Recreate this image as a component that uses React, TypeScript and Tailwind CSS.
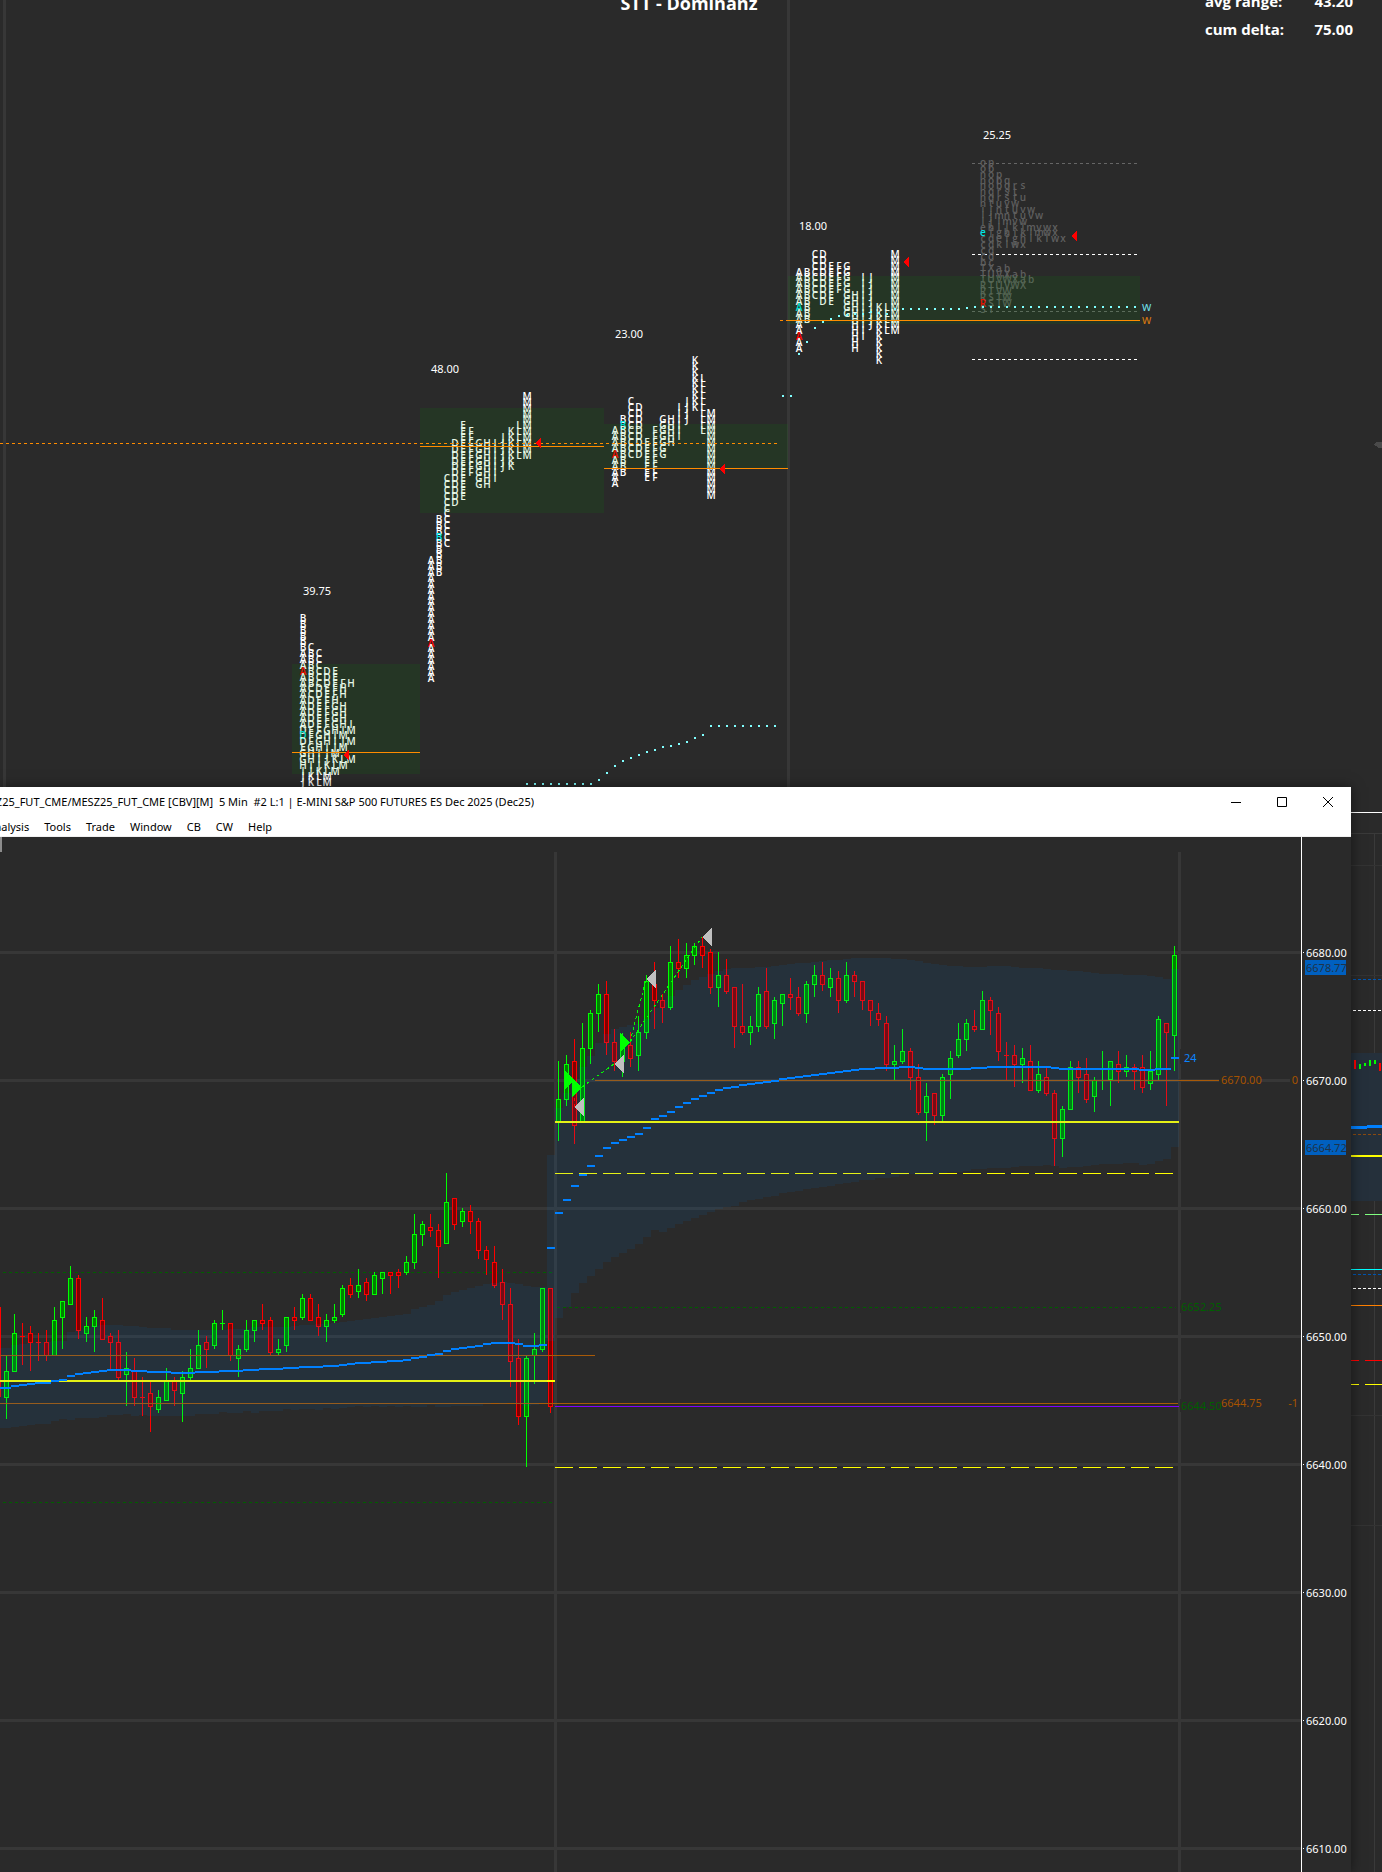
import React from 'react';

type Mark = { row: number; color: string };
type Column = { letter: string; from: number; to: number; marks?: Mark[] };

const ROW = 5.87;
const COL = 8;
const RED = '#ff0000';
const CYAN = '#00e5e5';

// split profiles: one column per bracket, rows are points below the high
const SPLIT_PROFILES: { x: number; y: number; columns: Column[] }[] = [
  {
    x: 431,
    y: 397,
    columns: [
      { letter: 'A', from: 28, to: 48, marks: [{ row: 42, color: RED }] },
      { letter: 'B', from: 21, to: 30, marks: [{ row: 24, color: CYAN }] },
      { letter: 'C', from: 14, to: 25 },
      { letter: 'D', from: 8, to: 18 },
      { letter: 'E', from: 5, to: 17 },
      { letter: 'F', from: 6, to: 13 },
      { letter: 'G', from: 8, to: 15 },
      { letter: 'H', from: 8, to: 15 },
      { letter: 'I', from: 8, to: 14 },
      { letter: 'J', from: 7, to: 12 },
      { letter: 'K', from: 6, to: 12 },
      { letter: 'L', from: 5, to: 10 },
      { letter: 'M', from: 0, to: 10 },
    ],
  },
  {
    x: 615,
    y: 361,
    columns: [
      { letter: 'A', from: 12, to: 21, marks: [{ row: 16, color: RED }] },
      { letter: 'B', from: 10, to: 19, marks: [{ row: 11, color: CYAN }] },
      { letter: 'C', from: 7, to: 16 },
      { letter: 'D', from: 8, to: 16 },
      { letter: 'E', from: 14, to: 20 },
      { letter: 'F', from: 12, to: 20 },
      { letter: 'G', from: 10, to: 16 },
      { letter: 'H', from: 10, to: 14 },
      { letter: 'I', from: 8, to: 13 },
      { letter: 'J', from: 7, to: 10 },
      { letter: 'K', from: 0, to: 8 },
      { letter: 'L', from: 3, to: 12 },
      { letter: 'M', from: 9, to: 23 },
    ],
  },
  {
    x: 799,
    y: 255,
    columns: [
      { letter: 'A', from: 3, to: 16, marks: [{ row: 9, color: CYAN }, { row: 14, color: RED }] },
      { letter: 'B', from: 3, to: 11 },
      { letter: 'C', from: 0, to: 7 },
      { letter: 'D', from: 0, to: 8 },
      { letter: 'E', from: 2, to: 8 },
      { letter: 'F', from: 2, to: 6 },
      { letter: 'G', from: 2, to: 10 },
      { letter: 'H', from: 7, to: 16 },
      { letter: 'I', from: 4, to: 14 },
      { letter: 'J', from: 4, to: 12 },
      { letter: 'K', from: 9, to: 18 },
      { letter: 'L', from: 9, to: 13 },
      { letter: 'M', from: 0, to: 13 },
    ],
  },
];

// collapsed profiles: one string per row
const ROW_PROFILES = [
  {
    x: 303,
    y: 619,
    color: '#ffffff',
    marks: [{ row: 9, color: RED }, { row: 20, color: CYAN }],
    rows: [
      'B', 'B', 'B', 'B', 'B', 'BC', 'ABC', 'ABC', 'ABC', 'ABCDE', 'ABCDE', 'ABCDEFH', 'ACDEFH', 'ACDEFH',
      'ADEFH', 'ADEFGH', 'ADEFGH', 'ADEFGH', 'ADEFGHI', 'DEFGHIM', 'DFGHIM', 'DFGHIJM', 'EGHIJM', 'GHIJM',
      'GHIJKLM', 'HIJKLM', 'IJKLM', 'JKLM', 'JKLM',
    ],
  },
  {
    x: 983,
    y: 163,
    color: '#5f5f5f',
    marks: [{ row: 12, color: CYAN }, { row: 24, color: RED }],
    rows: [
      'op', 'ob', 'nop', 'nobq', 'nobqrs', 'nqrst', 'nqrstu', 'ntuvw', 'ijntuvw', 'ijmntuvw', 'ijlmvw',
      'ehijklmvwx', 'efghiklmwx', 'cdefghiklwx', 'cdklwx', 'cd', 'cd', 'bc', 'TXab', 'TUVXab', 'TUVWXab',
      'RTUVWX', 'RTVW', 'RSTW', 'RSTW', 'ST',
    ],
  },
];

const VALUE_AREAS = [
  [292, 664, 128, 110],
  [420, 408, 184, 105],
  [604, 424, 184, 44],
  [788, 276, 352, 48],
];

const RANGE_LABELS: [number, number, string][] = [
  [303, 595, '39.75'],
  [431, 373, '48.00'],
  [615, 338, '23.00'],
  [799, 230, '18.00'],
  [983, 139, '25.25'],
];

const ARROWS = [
  [343, 755],
  [535, 443],
  [719, 469],
  [903, 262],
  [1071, 236],
];

const VWAP_DOTS: [number, number[]][] = [
  [527, [784, 784, 784, 784, 784, 784, 784, 784, 784, 780, 773, 766, 761, 758, 755, 752, 750, 747, 746, 744, 742, 738, 735]],
  [711, [726, 726, 726, 726, 726, 726, 726, 726, 726]],
  [783, [396, 396]],
  [799, [354, 342, 328, 322, 319, 316, 315, 314, 314, 312, 313, 314, 309]],
  [903, [309, 309, 309, 309, 309, 309, 309, 309, 308]],
  [975, Array(21).fill(307)],
];

// [up, high, top, bottom, low]
type Candle = [0 | 1, number, number, number, number];

const CANDLES: Candle[] = [
  [1, 1356, 1371, 1398, 1419], [1, 1314, 1333, 1372, 1372], [0, 1323, 1336, 1337, 1365], [0, 1326, 1333, 1343, 1371],
  [0, 1333, 1342, 1343, 1361], [0, 1330, 1342, 1356, 1361], [1, 1307, 1320, 1356, 1356], [1, 1301, 1301, 1318, 1349],
  [1, 1266, 1278, 1305, 1305], [0, 1275, 1278, 1331, 1339], [1, 1317, 1326, 1334, 1342], [1, 1310, 1317, 1327, 1352],
  [0, 1298, 1320, 1340, 1340], [0, 1333, 1336, 1343, 1369], [0, 1330, 1342, 1378, 1380], [1, 1352, 1368, 1375, 1406],
  [0, 1358, 1371, 1398, 1406], [0, 1377, 1397, 1398, 1416], [0, 1382, 1393, 1407, 1432], [1, 1390, 1397, 1410, 1413],
  [1, 1368, 1381, 1401, 1401], [0, 1377, 1381, 1391, 1406], [1, 1371, 1377, 1394, 1422], [1, 1349, 1368, 1378, 1380],
  [1, 1330, 1345, 1369, 1369], [0, 1336, 1342, 1350, 1368], [1, 1320, 1323, 1346, 1349], [1, 1310, 1323, 1324, 1330],
  [0, 1323, 1323, 1356, 1361], [1, 1345, 1349, 1359, 1377], [1, 1320, 1330, 1350, 1352], [1, 1320, 1320, 1331, 1342],
  [0, 1304, 1320, 1324, 1330], [0, 1317, 1320, 1353, 1356], [1, 1339, 1349, 1353, 1355], [1, 1317, 1317, 1346, 1352],
  [0, 1307, 1317, 1321, 1330], [1, 1294, 1298, 1318, 1320], [0, 1294, 1298, 1321, 1321], [0, 1304, 1317, 1327, 1336],
  [1, 1314, 1320, 1327, 1342], [1, 1304, 1317, 1321, 1323], [1, 1285, 1288, 1315, 1317], [0, 1278, 1285, 1295, 1298],
  [1, 1269, 1285, 1292, 1298], [0, 1278, 1282, 1295, 1301], [1, 1272, 1275, 1295, 1295], [1, 1272, 1272, 1279, 1294],
  [0, 1272, 1272, 1276, 1294], [0, 1269, 1272, 1276, 1288], [1, 1256, 1262, 1273, 1275], [1, 1214, 1234, 1263, 1269],
  [1, 1221, 1224, 1235, 1246], [0, 1214, 1227, 1231, 1237], [0, 1224, 1230, 1247, 1278], [1, 1173, 1202, 1244, 1244],
  [0, 1198, 1198, 1225, 1230], [1, 1208, 1211, 1222, 1227], [0, 1205, 1211, 1222, 1234], [0, 1218, 1221, 1251, 1259],
  [0, 1246, 1250, 1260, 1275], [0, 1246, 1262, 1286, 1288], [0, 1269, 1282, 1305, 1320], [0, 1288, 1304, 1362, 1387],
  [0, 1339, 1358, 1417, 1425], [1, 1356, 1358, 1417, 1467], [1, 1333, 1349, 1356, 1384], [1, 1288, 1288, 1350, 1352],
  [0, 1288, 1288, 1407, 1413], [1, 1061, 1099, 1122, 1141], [1, 1055, 1064, 1100, 1106], [0, 1039, 1061, 1126, 1144],
  [1, 1023, 1048, 1122, 1122], [1, 1010, 1013, 1049, 1064], [1, 984, 994, 1014, 1032], [0, 981, 994, 1043, 1055],
  [0, 1029, 1042, 1062, 1071], [1, 1033, 1043, 1062, 1077], [0, 1032, 1045, 1059, 1067], [1, 1016, 1032, 1056, 1071],
  [1, 975, 981, 1033, 1039], [0, 962, 984, 1001, 1029], [0, 994, 1000, 1008, 1023], [1, 946, 962, 1008, 1010],
  [0, 939, 962, 969, 978], [1, 943, 955, 969, 978], [1, 943, 946, 956, 965], [0, 937, 946, 956, 968],
  [0, 949, 952, 988, 994], [1, 952, 975, 988, 1007], [0, 959, 975, 992, 994], [0, 987, 987, 1027, 1048],
  [0, 984, 1026, 1033, 1035], [1, 1016, 1026, 1033, 1045], [1, 987, 994, 1027, 1032], [0, 968, 991, 1027, 1029],
  [1, 997, 1000, 1024, 1039], [1, 994, 994, 1004, 1026], [0, 978, 994, 998, 1010], [0, 987, 997, 1014, 1016],
  [1, 981, 984, 1014, 1023], [1, 965, 975, 985, 997], [0, 962, 975, 985, 991], [1, 968, 978, 988, 997],
  [0, 971, 978, 1001, 1013], [1, 962, 975, 1001, 1003], [0, 971, 975, 982, 997], [0, 981, 981, 1001, 1010],
  [0, 1000, 1000, 1011, 1026], [0, 1003, 1013, 1020, 1026], [0, 1016, 1023, 1065, 1071], [1, 1045, 1061, 1065, 1080],
  [1, 1029, 1051, 1062, 1064], [0, 1048, 1051, 1078, 1090], [0, 1064, 1077, 1113, 1115], [1, 1083, 1096, 1113, 1141],
  [0, 1093, 1093, 1116, 1125], [1, 1074, 1077, 1116, 1121], [1, 1051, 1058, 1075, 1099], [1, 1023, 1039, 1056, 1058],
  [1, 1019, 1023, 1040, 1051], [0, 1010, 1026, 1030, 1032], [1, 991, 1000, 1030, 1030], [0, 997, 1000, 1011, 1035],
  [0, 1007, 1013, 1052, 1061], [0, 1042, 1055, 1056, 1080], [0, 1045, 1055, 1065, 1087], [1, 1048, 1058, 1065, 1083],
  [0, 1045, 1061, 1091, 1091], [1, 1061, 1074, 1091, 1093], [0, 1068, 1077, 1094, 1096], [0, 1090, 1093, 1139, 1166],
  [1, 1106, 1109, 1139, 1157], [1, 1061, 1067, 1110, 1110], [0, 1061, 1067, 1078, 1093], [0, 1058, 1074, 1100, 1103],
  [1, 1077, 1080, 1097, 1112], [1, 1051, 1069, 1070, 1090], [1, 1061, 1061, 1080, 1106], [0, 1051, 1064, 1072, 1083],
  [1, 1055, 1067, 1072, 1077], [0, 1064, 1067, 1072, 1090], [0, 1055, 1067, 1088, 1093], [1, 1051, 1071, 1084, 1090],
  [1, 1016, 1019, 1075, 1080], [0, 1023, 1023, 1033, 1106], [1, 946, 955, 1036, 1071],
];

const VWAP = [
  1388, 1386, 1385, 1384, 1383, 1383, 1381, 1380, 1376, 1374, 1373, 1372, 1371, 1370, 1370, 1370, 1371, 1371, 1372,
  1372, 1372, 1373, 1373, 1373, 1372, 1372, 1372, 1371, 1371, 1371, 1370, 1370, 1369, 1369, 1369, 1368, 1368, 1367,
  1367, 1367, 1366, 1366, 1365, 1364, 1363, 1363, 1362, 1362, 1361, 1361, 1360, 1358, 1357, 1355, 1354, 1351, 1349,
  1348, 1347, 1346, 1344, 1343, 1343, 1343, 1344, 1346, 1346, 1345, 1248, 1213, 1200, 1186, 1175, 1166, 1156, 1148,
  1143, 1140, 1137, 1134, 1128, 1119, 1116, 1112, 1107, 1103, 1099, 1096, 1093, 1090, 1088, 1087, 1085, 1084, 1083,
  1082, 1081, 1079, 1078, 1077, 1076, 1075, 1074, 1073, 1072, 1071, 1070, 1069, 1069, 1068, 1068, 1068, 1067, 1067,
  1068, 1069, 1069, 1069, 1069, 1069, 1069, 1068, 1068, 1067, 1067, 1067, 1067, 1067, 1067, 1067, 1067, 1068, 1069,
  1069, 1069, 1069, 1069, 1069, 1069, 1069, 1069, 1069, 1070, 1070, 1069, 1069, 1058,
];

const BAND_TOP = [
  1348, 1345, 1344, 1343, 1342, 1342, 1341, 1341, 1332, 1330, 1328, 1326, 1325, 1325, 1325, 1326, 1326, 1327, 1328,
  1328, 1328, 1330, 1330, 1330, 1330, 1330, 1330, 1330, 1329, 1329, 1329, 1327, 1327, 1327, 1327, 1327, 1326, 1325,
  1325, 1324, 1324, 1323, 1322, 1321, 1320, 1319, 1318, 1317, 1316, 1315, 1314, 1309, 1307, 1305, 1301, 1295, 1292,
  1290, 1288, 1286, 1284, 1283, 1282, 1283, 1284, 1286, 1287, 1287, 1155, 1108, 1093, 1079, 1067, 1056, 1043, 1034,
  1029, 1027, 1025, 1024, 1019, 1008, 1000, 996, 990, 985, 980, 977, 974, 971, 969, 968, 968, 968, 967, 967, 966, 965,
  964, 963, 963, 962, 961, 960, 960, 959, 958, 958, 958, 958, 958, 959, 959, 960, 961, 963, 964, 965, 966, 966, 967,
  967, 967, 966, 966, 966, 967, 968, 968, 968, 969, 970, 970, 971, 971, 972, 973, 974, 974, 974, 975, 975, 975, 976,
  977, 979, 969,
];

const barX = (i: number) => 6 + i * 8;

const PRICES = ['6680.00', '6670.00', '6660.00', '6650.00', '6640.00', '6630.00', '6620.00', '6610.00'];
const gridY = (i: number) => 951 + i * 128;

const LABEL = 'text-[11px] [font-family:"Noto_Sans","Open_Sans",sans-serif]';
const LETTER = 'text-[10px] font-semibold [font-family:"Open_Sans","Noto_Sans",sans-serif]';

function Letter({ x, y, color, children }: { x: number; y: number; color: string; children: string }) {
  return (
    <text x={x} y={Math.round(y) + 3} fill={color} textAnchor="middle" className={LETTER}>
      {children}
    </text>
  );
}

function ProfileChart() {
  return (
    <svg className="block h-[787px] w-full shrink-0" shapeRendering="crispEdges" aria-label="Market profile">
      <rect x="3" y="0" width="3" height="787" fill="#373737" />
      <rect x="787" y="0" width="3" height="787" fill="#373737" />

      <g className='font-bold [font-family:"Open_Sans","Noto_Sans",sans-serif]' fill="#fff">
        <text x="689" y="10" textAnchor="middle" className="text-[18px]">STT - Dominanz</text>
        <g className="text-[15px]">
          <text x="1205" y="7">avg range:</text>
          <text x="1353" y="7" textAnchor="end">43.20</text>
          <text x="1205" y="35">cum delta:</text>
          <text x="1353" y="35" textAnchor="end">75.00</text>
        </g>
      </g>

      {RANGE_LABELS.map(([x, y, text]) => (
        <text key={text} x={x} y={y} fill="#fff" className={LABEL}>{text}</text>
      ))}

      <g stroke="#666" strokeDasharray="3 3">
        <path d="M972 163.5H1138M972 311.5H1138" />
        <path d="M972 254.5H1138M972 359.5H1138" stroke="#fff" />
      </g>

      {SPLIT_PROFILES.map((profile) =>
        profile.columns.map((col, c) =>
          Array.from({ length: col.to - col.from + 1 }, (_, n) => {
            const row = col.from + n;
            const mark = col.marks?.find((m) => m.row === row);
            return (
              <Letter
                key={`${profile.x}-${c}-${row}`}
                x={profile.x + c * COL}
                y={profile.y + row * ROW}
                color={mark ? mark.color : '#fff'}
              >
                {col.letter}
              </Letter>
            );
          }),
        ),
      )}

      {ROW_PROFILES.map((profile) =>
        profile.rows.map((letters, row) =>
          letters.split('').map((letter, c) => {
            const mark = c === 0 ? profile.marks.find((m) => m.row === row) : undefined;
            return (
              <Letter
                key={`${profile.x}-${c}-${row}`}
                x={profile.x + c * COL}
                y={profile.y + row * ROW}
                color={mark ? mark.color : profile.color}
              >
                {letter}
              </Letter>
            );
          }),
        ),
      )}

      {VALUE_AREAS.map(([x, y, w, h]) => (
        <rect key={x} x={x} y={y} width={w} height={h} fill="rgb(0,170,0)" fillOpacity="0.1" />
      ))}

      <g stroke="#ff8c00">
        <path d="M0 443.5H780" strokeDasharray="3 3" />
        <path d="M292 752.5H420M420 446.5H604M604 468.5H788M780 320.5H783M786 320.5H1140" />
      </g>

      {ARROWS.map(([x, y]) => (
        <path key={x} d={`M${x} ${y}l6 -6v12z`} fill="#ff0000" />
      ))}

      {VWAP_DOTS.map(([x, ys]) =>
        ys.map((y, i) => <rect key={`${x}-${i}`} x={x + i * 8 - 1} y={y - 1} width="2" height="2" fill="#80ffff" />),
      )}

      <g className='text-[12px] [font-family:"Open_Sans","Noto_Sans",sans-serif]'>
        <text x="1142" y="311" fill="#6fdfe6">w</text>
        <text x="1142" y="324" fill="#d87a10">w</text>
      </g>

      <path d="M1373 445l3 -3h6v6h-4l-1 -2z" fill="#4a4a4a" />
    </svg>
  );
}

function bandPath() {
  let top = '';
  let bottom = '';
  BAND_TOP.forEach((y, i) => {
    const x = barX(i) - 3;
    const low = 2 * VWAP[i] - y;
    top += `${i === 0 ? 'M0 ' : `L${x} `}${y}H${x + 8}`;
    bottom = `L${x + 8} ${low}H${i === 0 ? 0 : x}` + bottom;
  });
  return `${top}${bottom}Z`;
}

function CandleBar({ index, candle }: { index: number; candle: Candle }) {
  const [up, high, top, bottom, low] = candle;
  const x = barX(index);
  const color = up ? '#00ff00' : '#ff0000';
  const body = up ? '#008000' : '#800000';
  return (
    <g>
      <rect x={x} y={high} width="1" height={low - high} fill={color} />
      <rect x={x - 2} y={top} width="5" height={bottom - top} fill={color} />
      {bottom - top > 2 && <rect x={x - 1} y={top + 1} width="3" height={bottom - top - 2} fill={body} />}
    </g>
  );
}

function PriceChart() {
  return (
    <svg className="block h-[1035px] min-w-0 flex-1" shapeRendering="crispEdges" aria-label="5 minute candles">
      <g transform="translate(0 -837)">
        <rect x="0" y="837" width="2" height="15" fill="#8c8c8c" />
        {PRICES.map((price, i) => (
          <rect key={price} x="0" y={gridY(i)} width="100%" height="3" fill="#373737" />
        ))}
        <rect x="554" y="852" width="3" height="1020" fill="#373737" />
        <rect x="1178" y="852" width="3" height="1020" fill="#373737" />

        <g stroke="#005f00" strokeDasharray="3 3">
          <path d="M3 1272.5H552M3 1502.5H552M557 1307.5H1176" />
        </g>

        <rect x="-4" y="1307" width="5" height="90" fill="#ff0000" />
        <rect x="-3" y="1308" width="3" height="88" fill="#800000" />
        {CANDLES.map((candle, i) => (
          <CandleBar key={i} index={i} candle={candle} />
        ))}

        <path d="M0 1355.5H595M0 1403.5H1178M595 1080.5H1219" stroke="#a85a08" />
        <path d="M555 1406.5H1179" stroke="#8000ff" />
        <path d="M0 1381H555M555 1122H1179" stroke="#ffff00" strokeWidth="2" />
        <path d="M555 1173.5H1175M555 1467.5H1175" stroke="#ffff00" strokeDasharray="18 6" />

        <path d={bandPath()} fill="rgb(0,115,220)" fillOpacity="0.1" />

        {VWAP.map((y, i) => (
          <rect key={i} x={i === 0 ? 0 : barX(i) - 3} y={y - 1} width={i === 0 ? 11 : 8} height="2" fill="#0080ff" />
        ))}

        <g fill="none" stroke="#00ff00" strokeDasharray="3 3">
          <path d="M582 1087L614 1064M630 1042L646 979M630 1042L702 937" />
          <path d="M574.5 1086V1107" stroke="#ff0000" />
        </g>
        <path d="M565 1071l10 9l-10 9zM572 1078l10 9l-10 10zM620 1033l10 9l-10 10z" fill="#00ff00" />
        <path
          d="M574 1107l10 -10v19zM614 1064l10 -9v19zM646 979l10 -10v19zM702 937l10 -10v19z"
          fill="#c0c0c0"
        />

        <rect x="1180" y="1049" width="20" height="15" fill="#2a2a2a" />
        <rect x="1219" y="1073" width="41" height="14" fill="#2a2a2a" />
        <rect x="1290" y="1073" width="11" height="14" fill="#2a2a2a" />
        <rect x="1180" y="1300" width="40" height="13" fill="#2a2a2a" />
        <rect x="1180" y="1399" width="40" height="13" fill="#2a2a2a" />
        <g className={LABEL}>
          <text x="1184" y="1062" fill="#0a84ff">24</text>
          <g fill="#a65300">
            <text x="1221" y="1084">6670.00</text>
            <text x="1298" y="1084" textAnchor="end">0</text>
            <text x="1221" y="1407">6644.75</text>
            <text x="1298" y="1407" textAnchor="end">-1</text>
          </g>
          <g fill="#005f00">
            <text x="1181" y="1311">6652.25</text>
            <text x="1181" y="1410">6644.50</text>
          </g>
        </g>
      </g>
    </svg>
  );
}

function PriceAxis() {
  return (
    <svg className="block h-[1035px] w-[50px] shrink-0 border-l border-white" shapeRendering="crispEdges" aria-label="Price scale">
      <g transform="translate(0 -837)" className={LABEL}>
        {PRICES.map((price, i) => (
          <g key={price} fill="#fff">
            <rect x="1" y={gridY(i) + 1} width="1" height="1" />
            <text x="4" y={gridY(i) + 6}>{price}</text>
          </g>
        ))}
        <rect x="3" y="960" width="41" height="15" fill="#0060c0" />
        <text x="4" y="972" fill="#1f3348">6678.77</text>
        <rect x="3" y="1140" width="41" height="15" fill="#0060c0" />
        <text x="4" y="1152" fill="#1f3348">6664.72</text>
      </g>
    </svg>
  );
}

// slice of the chart that sits behind the window
function BackgroundStrip() {
  return (
    <svg className="block h-[1085px] w-[31px] shrink-0" shapeRendering="crispEdges" aria-hidden="true">
      <g transform="translate(0 -787)" fill="none">
        <path d="M0 812.5H31" stroke="#fff" />
        <path d="M0 833.5H31M23.5 833V1872" stroke="#3a3a3a" />
        <path d="M0 865.5H31M0 975.5H31M0 1085.5H31M0 1195.5H31M0 1415.5H31M0 1525.5H31" stroke="#333" />
        <rect x="0" y="1053" width="31" height="148" fill="#25303b" />
        <path d="M2 979.5H31M2 1274.5H31" stroke="#0055b0" strokeDasharray="3 2" />
        <path d="M2 1010.5H31M2 1288.5H31" stroke="#fff" strokeDasharray="3 2" />
        <path d="M3.5 1060V1069M28.5 1063V1071" stroke="#ff0000" strokeWidth="2" />
        <path d="M8.5 1064V1069M13.5 1063V1066M18.5 1060V1066M23.5 1060V1064" stroke="#00ff00" strokeWidth="2" />
        <path d="M0 1127.5H16M16 1126.5H31" stroke="#0080ff" strokeWidth="3" />
        <path d="M2 1134.5H31" stroke="#8a4a10" strokeDasharray="3 2" />
        <path d="M0 1156H31" stroke="#ffff00" strokeWidth="2" />
        <path d="M0 1214.5H8M14 1214.5H31" stroke="#80ff80" />
        <path d="M0 1269.5H31" stroke="#00ffff" />
        <path d="M0 1305.5H31" stroke="#ff8000" />
        <path d="M0 1360.5H8M14 1360.5H31" stroke="#ff0000" />
        <path d="M0 1384.5H8M14 1384.5H31" stroke="#ffff00" />
      </g>
    </svg>
  );
}

const MENU = ['Analysis', 'Tools', 'Trade', 'Window', 'CB', 'CW', 'Help'];

const CONTROLS = [
  { label: 'Minimize', d: 'M0 5.5H10' },
  { label: 'Maximize', d: 'M0.5 0.5H9.5V9.5H0.5Z' },
  { label: 'Close', d: 'M0 0L10 10M10 0L0 10' },
];

function ChartWindow() {
  return (
    <section className="relative min-w-0 flex-1 bg-[#2a2a2a] shadow-[0_0_12px_rgba(0,0,0,0.5)]">
      <header className='h-[50px] border-b border-[#f0f0f0] bg-white text-[11px] text-black [font-family:"Noto_Sans","Open_Sans",sans-serif]'>
        <div className="flex h-[30px] items-center justify-between">
          <h1 className="flex w-[534px] justify-end overflow-hidden whitespace-pre">
            MESZ25_FUT_CME/MESZ25_FUT_CME [CBV][M]  5 Min  #2 L:1 | E-MINI S&amp;P 500 FUTURES ES Dec 2025 (Dec25)
          </h1>
          <div className="flex">
            {CONTROLS.map((control) => (
              <button key={control.label} type="button" aria-label={control.label} className="flex w-[46px] justify-center">
                <svg width="10" height="10" fill="none" stroke="#000">
                  <path d={control.d} />
                </svg>
              </button>
            ))}
          </div>
        </div>
        <nav className="flex w-[272px] justify-end gap-[15px] overflow-hidden">
          {MENU.map((item) => (
            <button key={item} type="button" className="leading-5">
              {item}
            </button>
          ))}
        </nav>
      </header>
      <div className="flex">
        <PriceChart />
        <PriceAxis />
      </div>
    </section>
  );
}

export default function App() {
  return (
    <main className="flex min-h-screen flex-col overflow-hidden bg-[#2a2a2a]">
      <ProfileChart />
      <div className="flex">
        <ChartWindow />
        <BackgroundStrip />
      </div>
    </main>
  );
}
